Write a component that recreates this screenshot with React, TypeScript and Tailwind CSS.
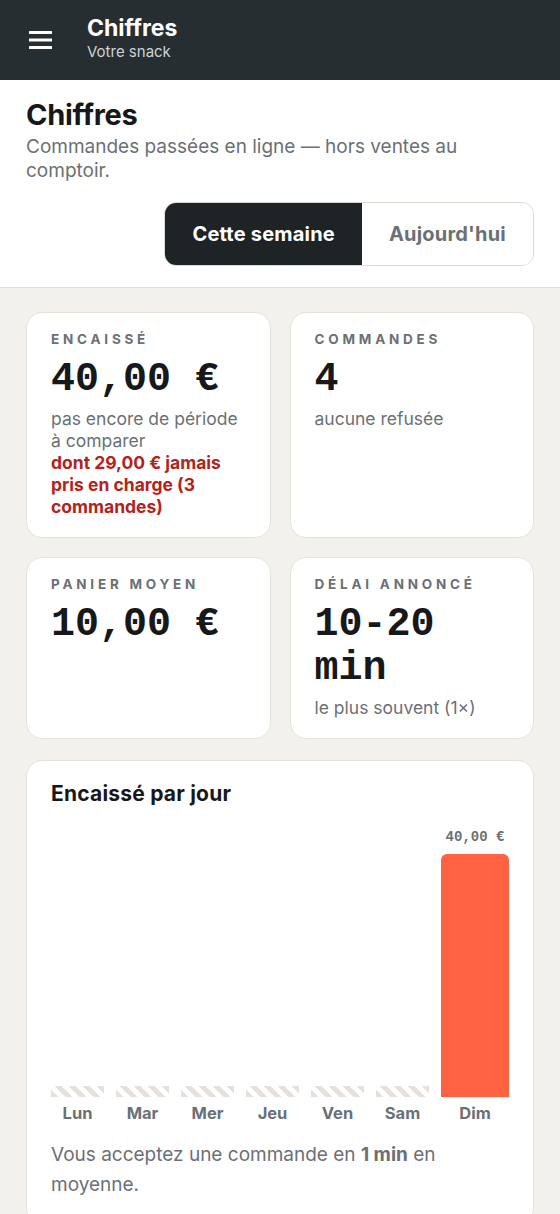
import React from "react";

const sans = "font-['Inter','Liberation_Sans',sans-serif]";
const mono = "font-['Liberation_Mono','DejaVu_Sans_Mono',monospace]";

const days = [
  { label: "Lun", amount: 0 },
  { label: "Mar", amount: 0 },
  { label: "Mer", amount: 0 },
  { label: "Jeu", amount: 0 },
  { label: "Ven", amount: 0 },
  { label: "Sam", amount: 0 },
  { label: "Dim", amount: 40 },
];

function StatCard({ label, children }: { label: string; children: React.ReactNode }) {
  return (
    <div className="rounded-2xl border border-[#e6e3dc] bg-white px-6 pt-[17px] pb-[19px]">
      <div className="text-[13.5px] font-bold uppercase leading-[18px] tracking-[0.28em] text-[#6b7075]">
        {label}
      </div>
      {children}
    </div>
  );
}

function BigValue({ children }: { children: React.ReactNode }) {
  return (
    <div className={`${mono} mt-2.5 text-[40px] font-bold leading-[44px] text-[#161819]`}>
      {children}
    </div>
  );
}

export default function App() {
  const max = Math.max(...days.map((d) => d.amount));

  return (
    <div className={`${sans} min-h-screen bg-[#f2f1ec] text-[#161819]`}>
      {/* Top bar */}
      <header className="flex h-20 items-center gap-[35px] bg-[#262e32] px-[29px]">
        <svg width="23" height="18" viewBox="0 0 23 18" className="shrink-0">
          <rect x="0" y="0" width="23" height="3" rx="0.5" fill="#fff" />
          <rect x="0" y="7.5" width="23" height="3" rx="0.5" fill="#fff" />
          <rect x="0" y="15" width="23" height="3" rx="0.5" fill="#fff" />
        </svg>
        <div className="-mt-1">
          <div className="text-[23px] font-bold leading-7 text-white">Chiffres</div>
          <div className="text-[15px] leading-5 text-[#cfd3d6]">Votre snack</div>
        </div>
      </header>

      {/* Page heading */}
      <section className="border-b border-[#e3e0d8] bg-white px-[26px] pt-[17px] pb-[21px]">
        <h1 className="text-[29px] font-bold leading-9 tracking-[-0.01em]">Chiffres</h1>
        <p className="mt-[2px] text-[19px] leading-6 text-[#6b7075]">
          Commandes passées en ligne — hors ventes au comptoir.
        </p>
        <div className="mt-[19px] flex justify-end">
          <div className="flex h-16 overflow-hidden rounded-xl border border-[#dcd9d0]">
            <button className="bg-[#1e2326] px-[27px] text-[20px] font-bold tracking-[0.01em] text-white">
              Cette semaine
            </button>
            <button className="bg-white px-[27px] text-[20px] font-bold tracking-[0.01em] text-[#6b7075]">
              Aujourd'hui
            </button>
          </div>
        </div>
      </section>

      {/* Stats */}
      <main className="px-[26px] pt-6 pb-6">
        <div className="grid grid-cols-2 gap-x-[19px] gap-y-[19px]">
          <StatCard label="Encaissé">
            <BigValue>40,00 €</BigValue>
            <p className="mt-1.5 text-[17.5px] leading-[22px] text-[#6b7075]">
              pas encore de période à comparer
            </p>
            <p className="text-[17.5px] font-bold leading-[22px] text-[#b3231b]">
              dont 29,00 € jamais pris en charge (3 commandes)
            </p>
          </StatCard>
          <StatCard label="Commandes">
            <BigValue>4</BigValue>
            <p className="mt-1.5 text-[17.5px] leading-[22px] text-[#6b7075]">aucune refusée</p>
          </StatCard>
          <StatCard label="Panier moyen">
            <BigValue>10,00 €</BigValue>
          </StatCard>
          <StatCard label="Délai annoncé">
            <BigValue>10-20 min</BigValue>
            <p className="mt-1.5 text-[17.5px] leading-[22px] text-[#6b7075]">le plus souvent (1×)</p>
          </StatCard>
        </div>

        {/* Chart */}
        <div className="mt-[21px] rounded-2xl border border-[#e6e3dc] bg-white px-6 pt-[19px] pb-6">
          <h2 className="text-[21px] font-bold leading-7 tracking-[0.01em]">Encaissé par jour</h2>
          <div className="mt-[19px] grid h-[270px] grid-cols-[repeat(6,minmax(0,1fr))_68px] gap-x-3">
            {days.map((d) => (
              <div key={d.label} className="flex flex-col justify-end">
                {d.amount > 0 ? (
                  <>
                    <div className={`${mono} mb-[7px] text-center text-[14px] font-bold leading-5 text-[#6b7075]`}>
                      {d.amount.toFixed(2).replace(".", ",")} €
                    </div>
                    <div
                      className="rounded-t-md bg-[#ff6240]"
                      style={{ height: `${(d.amount / max) * 243}px` }}
                    />
                  </>
                ) : (
                  <div className="h-[11px] bg-[repeating-linear-gradient(45deg,#e6e2db_0_5px,transparent_5px_10px)]" />
                )}
              </div>
            ))}
          </div>
          <div className="mt-1 grid grid-cols-[repeat(6,minmax(0,1fr))_68px] gap-x-3">
            {days.map((d) => (
              <div key={d.label} className="text-center text-[16.5px] font-bold leading-6 text-[#6b7075]">
                {d.label}
              </div>
            ))}
          </div>
          <p className="mt-[15px] text-[19px] leading-[30px] text-[#6b7075]">
            Vous acceptez une commande en <strong className="font-bold">1 min</strong> en moyenne.
          </p>
        </div>
      </main>
    </div>
  );
}
